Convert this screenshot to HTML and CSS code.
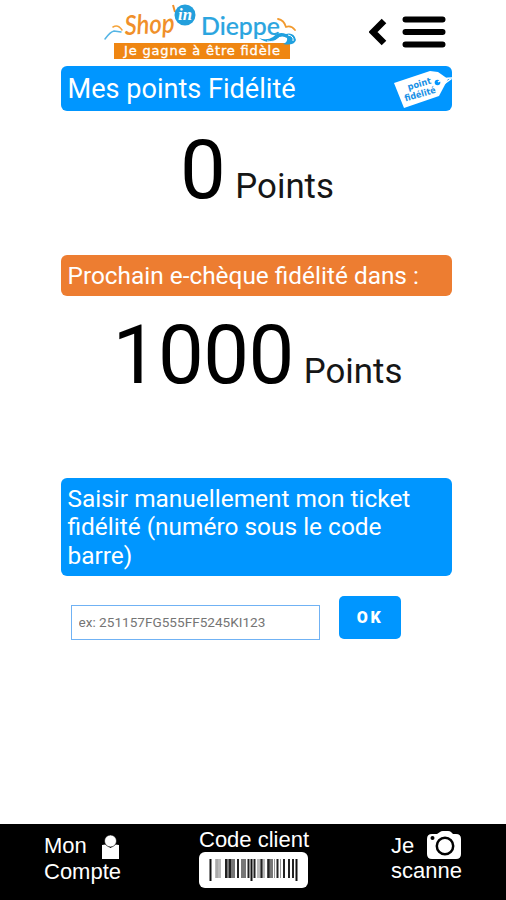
FILE: index.html
```html
<!DOCTYPE html>
<html lang="fr">
<head>
<meta charset="utf-8">
<meta name="viewport" content="width=device-width, initial-scale=1">
<title>Shop'in Dieppe</title>
<link rel="stylesheet" href="styles.css">
</head>
<body>
<div class="app">
  <header class="header">
    <svg class="logo" width="200" height="66" viewBox="100 0 200 66" role="img" aria-label="Shop'in Dieppe">
      <g fill="none" stroke-linecap="round" stroke-linejoin="round">
        <path d="M105 39Q110 32 114 31L121 32" stroke="#55b5e5" stroke-width="1.5"/>
        <path d="M113 27Q118 24 122 30" stroke="#f5a33a" stroke-width="1.5"/>
        <path d="M278 19Q284 20 286 27Q291 25 295 30" stroke="#f29a2e" stroke-width="1.8"/>
      </g>
      <rect x="114" y="43" width="176" height="16" fill="#ef8612"/>
      <path d="M259 38Q267 41 273 37Q279 31 286 34Q294 32 296 40Q294 46 283 44Q288 42 287 38Q281 34 276 40Q268 45 259 38Z" fill="#1fa0df"/>
      <path d="M267 41Q275 43 280 37M288 35Q294 36 293 41" fill="none" stroke="#fff" stroke-width="1"/>
      <text class="logo-shop" x="125" y="35" textLength="50" lengthAdjust="spacingAndGlyphs" transform="rotate(-3 125 35)">Shop</text>
      <path d="M173 5L175 12" stroke="#f0902a" stroke-width="2"/>
      <circle cx="185" cy="15" r="10.5" fill="#239fdc"/>
      <text class="logo-in" x="178" y="20" textLength="14" lengthAdjust="spacingAndGlyphs">in</text>
      <text class="logo-city" x="201" y="35" textLength="79" lengthAdjust="spacingAndGlyphs">Dieppe</text>
      <text class="logo-tag" x="124" y="55" textLength="156" lengthAdjust="spacing">Je gagne à être fidèle</text>
    </svg>
    <nav class="tools">
      <svg width="20" height="32" viewBox="0 0 20 32"><path d="M15 5L4 16L15 27" fill="none" stroke="#000" stroke-width="6.5"/></svg>
      <svg width="44" height="34" viewBox="0 0 44 34"><path d="M3.500 4.500H40.500M3.500 17H40.500M3.500 29.500H40.500" stroke="#000" stroke-width="6" stroke-linecap="round"/></svg>
    </nav>
  </header>
  <main class="main">
    <h1 class="banner banner-points">Mes points Fidélité
      <svg class="tag" width="58" height="38" viewBox="0 0 58 38">
        <path d="M0 13L36 1L44 2L54 9L45 26L10 38Z" fill="#fff"/>
        <circle cx="43.500" cy="12.500" r="2.800" fill="#0096ff"/>
        <path d="M44 12Q49 8 58 8M50 14L58 8" fill="none" stroke="#fff" stroke-width="1.500"/>
        <g transform="rotate(-16 26 20)">
          <text class="tag-text" x="15" y="17" textLength="24" lengthAdjust="spacingAndGlyphs">point</text>
          <text class="tag-text" x="9" y="27" textLength="32" lengthAdjust="spacingAndGlyphs">fidélité</text>
        </g>
      </svg>
    </h1>
    <p class="score"><span class="value">0</span> Points</p>
    <h2 class="banner banner-next">Prochain e-chèque fidélité dans :</h2>
    <p class="score score-next"><span class="value">1000</span> Points</p>
    <h2 class="banner banner-entry">Saisir manuellement mon ticket fidélité (numéro sous le code barre)</h2>
    <form class="entry">
      <input class="field" type="text" placeholder="ex: 251157FG555FF5245KI123" aria-label="Ticket">
      <button class="ok" type="button">OK</button>
    </form>
  </main>
  <footer class="footer">
    <div class="item account">
      <span class="row">Mon
        <svg width="17" height="24" viewBox="0 0 17 24"><path d="M0 10L3.500 9.500L8.500 13L13.500 9.500L17 10V24H0Z" fill="#fff"/><circle cx="8.500" cy="6" r="6" fill="#fff" stroke="#000" stroke-width=".6"/></svg>
      </span>
      <span>Compte</span>
    </div>
    <div class="item code">
      <span>Code client</span>
      <svg class="barcode" width="109" height="36" viewBox="0 0 109 36">
        <rect width="109" height="36" rx="6" fill="#fff"/>
        <path d="M16 7H22V26H16ZM58 7H66V26H58Z" fill="#bbb"/>
        <path d="M27 7H36V26H27ZM42 7H47V26H42ZM68 7H74V26H68Z" fill="#777"/>
        <path d="M11.500 7V29M52.500 7V29M97.500 7V29" stroke="#111" stroke-width="2"/>
        <path d="M27 7V26M31 7V26M39 7V26M49.500 7V26M55.500 7V26M62.500 7V26M69.500 7V26M78.500 7V26M85 7V26M90 7V26M94 7V26" stroke="#222" stroke-width="2"/>
        <path d="M18 7V26M75.500 7V26M81.500 7V26" stroke="#999" stroke-width="1"/>
      </svg>
    </div>
    <div class="item scan">
      <span class="row">Je
        <svg width="34" height="28" viewBox="0 0 34 28">
          <path d="M5 3H10L13 1Q14 0 16 0H21Q23 0 24 1L26 3H29Q34 3 34 8V23Q34 28 29 28H5Q0 28 0 23V8Q0 3 5 3Z" fill="#fff"/>
          <circle cx="18" cy="15" r="8.200" fill="none" stroke="#000" stroke-width="2.500"/>
          <circle cx="5.500" cy="7" r="2" fill="#000"/>
        </svg>
      </span>
      <span>scanne</span>
    </div>
  </footer>
</div>
</body>
</html>
```

FILE: styles.css
```css
* { box-sizing: border-box; }
body { margin: 0; background: #fff; font-family: Roboto, "Liberation Sans", sans-serif; color: #000; }
.app { display: flex; flex-direction: column; height: 900px; overflow: hidden; }
.header { display: flex; justify-content: space-between; height: 66px; padding: 0 60px 0 100px; }
.logo { display: block; }
.logo-shop { font: italic 600 27px Lato, sans-serif; fill: #f0902a; }
.logo-in { font: italic 700 17px "Liberation Serif", serif; fill: #fff; }
.logo-city { font: 500 24px Lato, sans-serif; fill: #2ba5df; stroke: #2ba5df; stroke-width: .2; }
.logo-tag { font: 400 13px "DejaVu Sans", sans-serif; fill: #fff; stroke: #fff; stroke-width: .35; }
.tools { display: flex; align-items: center; gap: 14px; height: 64px; }
.tools svg { display: block; }
.tools svg:first-child { margin-right: -1px; }
.main { flex: 1; padding: 0 54px 0 61px; }
.banner { margin: 0; padding: 0 6.5px; border-radius: 6px; color: #fff; font-size: 26px; font-weight: 400; line-height: 28.6px; background: #0096ff; }
.banner-points { display: flex; justify-content: space-between; align-items: center; height: 45px; padding-right: 0; padding-top: 1px; font-size: 27.1px; }
.score { display: flex; justify-content: center; align-items: baseline; gap: 10px; height: 144px; margin: 0; padding-top: 11px; padding-left: 1px; color: #161616; font-size: 34.8px; line-height: 96px; }
.tag-text { font: 700 9px "DejaVu Sans", sans-serif; fill: #168fe5; }
.value { color: #000; font-size: 81.5px; letter-spacing: -.5px; }
.banner-next { height: 41px; line-height: 41px; font-size: 24.4px; background: #ed7d31; }
.score-next { height: 182px; padding-left: 2px; }
.banner-entry { height: 98px; padding-top: 6.5px; font-size: 24.45px; }
.entry { display: flex; align-items: flex-start; gap: 19px; padding: 20px 0 0 10px; }
.field { width: 249px; height: 35px; margin-top: 9px; padding: 0 6.5px 2px; border: 1px solid #70b2f4; border-radius: 0; background: #fff; font: 13.6px Roboto, sans-serif; }
.field::placeholder { color: #757575; opacity: 1; }
.ok { width: 62px; height: 43px; padding: 0; border: 0; border-radius: 5px; background: #0096ff; color: #fff; font: 900 16px Roboto, sans-serif; letter-spacing: 2.5px; }
.footer { display: grid; grid-template-columns: 199px 192px 1fr; height: 76px; background: #000; color: #fff; font: 22px/26px "Liberation Sans", sans-serif; }
.item { display: flex; flex-direction: column; }
.row { display: flex; height: 26px; }
.account { padding: 9px 0 0 44px; }
.account svg { margin: 2px 0 0 15px; }
.code { padding-top: 3px; }
.barcode { margin-top: -1px; }
.scan { padding: 8px 0 0; }
.scan .row { line-height: 27px; }
.scan svg { flex: none; margin: -1px 0 0 13px; }
```
